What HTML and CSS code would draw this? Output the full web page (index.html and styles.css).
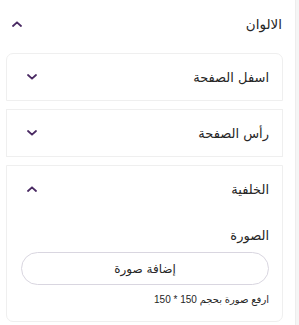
FILE: index.html
```html
<!DOCTYPE html>
<html lang="ar">
<head>
<meta charset="utf-8">
<link rel="stylesheet" href="styles.css">
</head>
<body>
<div class="page">
  <div class="panel" dir="rtl">
    <div class="section-head">
      <span class="title">الالوان</span>
      <svg class="chev" width="10" height="6" viewBox="0 0 10 6"><path d="M1 5 L5 1.3 L9 5" fill="none" stroke="#4a2a63" stroke-width="1.8" stroke-linecap="round" stroke-linejoin="round"/></svg>
    </div>
    <div class="cards">
      <div class="card first">
        <div class="card-head">
          <span class="ctitle">اسفل الصفحة</span>
          <svg class="chev" width="10" height="6" viewBox="0 0 10 6"><path d="M1 1 L5 4.7 L9 1" fill="none" stroke="#4a2a63" stroke-width="1.8" stroke-linecap="round" stroke-linejoin="round"/></svg>
        </div>
      </div>
      <div class="card">
        <div class="card-head">
          <span class="ctitle">رأس الصفحة</span>
          <svg class="chev" width="10" height="6" viewBox="0 0 10 6"><path d="M1 1 L5 4.7 L9 1" fill="none" stroke="#4a2a63" stroke-width="1.8" stroke-linecap="round" stroke-linejoin="round"/></svg>
        </div>
      </div>
      <div class="card last">
        <div class="card-head">
          <span class="ctitle">الخلفية</span>
          <svg class="chev" width="10" height="6" viewBox="0 0 10 6"><path d="M1 5 L5 1.3 L9 5" fill="none" stroke="#4a2a63" stroke-width="1.8" stroke-linecap="round" stroke-linejoin="round"/></svg>
        </div>
        <div class="card-body">
          <div class="label">الصورة</div>
          <button class="add-btn">إضافة صورة</button>
          <div class="hint">ارفع صورة بحجم 150 * 150</div>
        </div>
      </div>
    </div>
  </div>
  <div class="strip"></div>
</div>
</body>
</html>
```

FILE: styles.css
```css
html, body {
  margin: 0;
  padding: 0;
  background: #ffffff;
}
body {
  font-family: "DejaVu Sans", "Noto Sans", sans-serif;
  color: #262626;
}
.page {
  display: flex;
  width: 299px;
  height: 325px;
}
.panel {
  width: 295px;
  flex: none;
}
.strip {
  flex: 1;
  background: #f5f5f5;
  border-left: 1px solid #ededed;
}
.section-head {
  height: 47px;
  display: flex;
  align-items: center;
  justify-content: space-between;
  padding: 0 13px 0 12px;
}
.title {
  font-size: 13.5px;
}
.chev {
  display: block;
}
.cards {
  display: flex;
  flex-direction: column;
  gap: 8px;
  margin: 6px 12px 0 6px;
}
.card {
  border: 1px solid #efefef;
  background: #fff;
}
.card.first {
  border-radius: 7px 7px 0 0;
}
.card.last {
  border-radius: 0 0 7px 7px;
}
.card-head {
  height: 46px;
  display: flex;
  align-items: center;
  justify-content: space-between;
  padding: 0 13px 0 20px;
}
.ctitle {
  font-size: 13px;
}
.card-body {
  padding: 15px 13px 14px 14px;
  display: flex;
  flex-direction: column;
}
.label {
  font-size: 13px;
  line-height: 18px;
  margin-bottom: 7px;
}
.add-btn {
  height: 33px;
  border: 1px solid #d9d6e0;
  border-radius: 17px;
  background: #fff;
  font-family: inherit;
  font-size: 12px;
  color: #262626;
  padding: 0;
}
.hint {
  margin-top: 8px;
  font-family: "Liberation Sans", "DejaVu Sans", sans-serif;
  font-size: 10px;
  font-weight: 500;
  line-height: 14px;
}
```
